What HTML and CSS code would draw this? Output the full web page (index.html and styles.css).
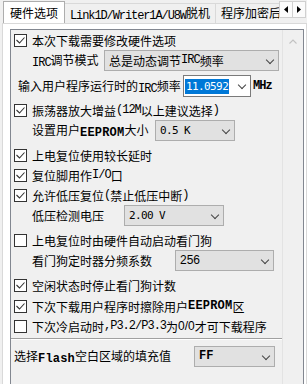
FILE: index.html
```html
<!DOCTYPE html>
<html>
<head>
<meta charset="utf-8">
<link rel="stylesheet" href="styles.css">
</head>
<body>
<div class="strip">
  <div class="tabs">
    <div class="tab sel">硬件选项</div>
    <div class="tab"><span class="l t">Link1D/Writer1A/U8W</span>脱机</div>
    <div class="tab">程序加密后</div>
  </div>
  <div class="spin">
    <span class="sb"><svg width="4" height="7" viewBox="0 0 4 7"><path d="M4 0 L0 3.5 L4 7Z" fill="#000"/></svg></span>
    <span class="sb"><svg width="4" height="7" viewBox="0 0 4 7"><path d="M0 0 L4 3.5 L0 7Z" fill="#000"/></svg></span>
  </div>
</div>
<div class="panel">
  <div class="box">
    <div class="content">
      <div class="row"><span class="cb"><svg width="11" height="11" viewBox="0 0 11 11"><path d="M1.5 5 L4.5 8 L9.5 2.5" fill="none" stroke="#333" stroke-width="1.1"/></svg></span>本次下载需要修改硬件选项</div>
      <div class="row ind"><span class="lbl w72"><span class="l">IRC</span>调节模式</span><span class="sel s175">总是动态调节<span class="l">IRC</span>频率<i class="chev"></i></span></div>
      <div class="row m6 ind2"><span class="lbl w165">输入用户程序运行时的<span class="l">IRC</span>频率</span><span class="edit"><span class="hl">11.0592</span><i class="chev"></i></span><span class="l unit">MHz</span></div>
      <div class="row m4"><span class="cb"><svg width="11" height="11" viewBox="0 0 11 11"><path d="M1.5 5 L4.5 8 L9.5 2.5" fill="none" stroke="#333" stroke-width="1.1"/></svg></span>振荡器放大增益<span class="l">(12M</span>以上建议选择<span class="l">)</span></div>
      <div class="row ind"><span class="lbl w123">设置用户<span class="l w">EEPROM</span>大小</span><span class="sel s80"><span class="mono">0.5 K</span><i class="chev"></i></span></div>
      <div class="row m5"><span class="cb"><svg width="11" height="11" viewBox="0 0 11 11"><path d="M1.5 5 L4.5 8 L9.5 2.5" fill="none" stroke="#333" stroke-width="1.1"/></svg></span>上电复位使用较长延时</div>
      <div class="row"><span class="cb"><svg width="11" height="11" viewBox="0 0 11 11"><path d="M1.5 5 L4.5 8 L9.5 2.5" fill="none" stroke="#333" stroke-width="1.1"/></svg></span>复位脚用作<span class="l">I/O</span>口</div>
      <div class="row"><span class="cb"><svg width="11" height="11" viewBox="0 0 11 11"><path d="M1.5 5 L4.5 8 L9.5 2.5" fill="none" stroke="#333" stroke-width="1.1"/></svg></span>允许低压复位<span class="l">(</span>禁止低压中断<span class="l">)</span></div>
      <div class="row ind"><span class="lbl w92">低压检测电压</span><span class="sel s100"><span class="mono">2.00 V</span><i class="chev"></i></span></div>
      <div class="row m5"><span class="cb"></span>上电复位时由硬件自动启动看门狗</div>
      <div class="row ind"><span class="lbl w143">看门狗定时器分频系数</span><span class="sel s99"><span class="sans">256</span><i class="chev"></i></span></div>
      <div class="row m5"><span class="cb"><svg width="11" height="11" viewBox="0 0 11 11"><path d="M1.5 5 L4.5 8 L9.5 2.5" fill="none" stroke="#333" stroke-width="1.1"/></svg></span>空闲状态时停止看门狗计数</div>
      <div class="row m1"><span class="cb"><svg width="11" height="11" viewBox="0 0 11 11"><path d="M1.5 5 L4.5 8 L9.5 2.5" fill="none" stroke="#333" stroke-width="1.1"/></svg></span>下次下载用户程序时擦除用户<span class="l w">EEPROM</span>区</div>
      <div class="row"><span class="cb"></span>下次冷启动时<span class="l">,P3.2/P3.3</span>为<span class="sans">0/0</span>才可下载程序</div>
      <div class="sep"></div>
      <div class="row m6 ind1"><span class="lbl w180">选择<span class="l w">Flash</span>空白区域的填充值</span><span class="sel s81"><span class="l ff">FF</span><i class="chev"></i></span></div>
    </div>
    <div class="vscroll"><svg width="8" height="5" viewBox="0 0 8 5"><path d="M0.5 4.5 L4 1 L7.5 4.5" fill="none" stroke="#c2c2c2" stroke-width="1.1"/></svg></div>
  </div>
</div>
</body>
</html>
```
FILE: styles.css
```css
html, body { margin: 0; padding: 0; }
body {
  width: 307px;
  height: 384px;
  overflow: hidden;
  background: #f0f0f0;
  font-family: "Noto Sans CJK SC", sans-serif;
  font-size: 12px;
  color: #000;
}
.l {
  font-family: "Liberation Mono", monospace;
  font-size: 12px;
  letter-spacing: -1px;
  vertical-align: -1px;
}
.l.w { letter-spacing: 0.2px; font-weight: bold; }
.l.t { letter-spacing: -1.1px; }
.mono {
  font-family: "DejaVu Sans Mono", monospace;
  font-size: 11px;
  letter-spacing: -0.6px;
  white-space: pre;
}
.sans { font-family: "Liberation Sans", sans-serif; font-size: 12px; }
.ff { font-weight: bold; letter-spacing: 0; }

/* tab strip */
.strip { display: flex; height: 23px; }
.tabs {
  display: flex;
  flex: 1;
  overflow: hidden;
  align-items: flex-end;
  padding-left: 3px;
  height: 23px;
}
.tab {
  box-sizing: border-box;
  height: 20px;
  line-height: 18px;
  padding: 0 5px 0 5px;
  border: 1px solid #d9d9d9;
  border-bottom: none;
  background: #f0f0f0;
  white-space: nowrap;
  margin-left: -1px;
  flex: none;
}
.tab.sel {
  height: 23px;
  line-height: 23px;
  background: #fff;
  padding: 0 6px 0 6px;
  margin-left: 0;
  position: relative;
  z-index: 1;
  margin-bottom: -1px;
}
.spin { display: flex; padding: 1px 1px 0 1px; }
.sb {
  box-sizing: border-box;
  width: 14px;
  height: 17px;
  border: 1px solid #d0d0d0;
  background: #fbfbfb;
  display: flex;
  align-items: center;
  justify-content: center;
  margin-left: -1px;
}

/* panel */
.panel {
  margin-left: 2px;
  border: 1px solid #d9d9d9;
  background: #fff;
  padding: 5px 2px 0 7px;
  height: 400px;
}
.box {
  display: flex;
  width: 294px;
  box-sizing: border-box;
  border: 1px solid #828790;
  background: #f0f0f0;
  height: 400px;
}
.content {
  width: 271px;
  padding-left: 3px;
  box-sizing: border-box;
  display: flex;
  flex-direction: column;
}
.vscroll {
  flex: 1;
  border-left: 1px solid #e3e3e3;
  display: flex;
  justify-content: center;
  padding-top: 9px;
  align-items: flex-start;
}

.row {
  display: flex;
  align-items: center;
  height: 20px;
  white-space: nowrap;
  flex: none;
}
.m1 { margin-top: 1px; }
.m4 { margin-top: 4px; }
.m5 { margin-top: 5px; }
.m6 { margin-top: 6px; }
.ind { padding-left: 18px; }
.ind1 { padding-left: 0; }
.ind2 { padding-left: 4px; }

.cb {
  box-sizing: border-box;
  width: 13px;
  height: 13px;
  border: 1px solid #333;
  background: #fff;
  margin-right: 5px;
  display: flex;
  flex: none;
}
.lbl { flex: none; }
.w72 { width: 72px; }
.w92 { width: 92px; }
.w123 { width: 123px; }
.w143 { width: 143px; }
.w165 { width: 165px; }
.w180 { width: 180px; }

.sel, .edit {
  position: relative;
  box-sizing: border-box;
  height: 21px;
  display: flex;
  align-items: center;
  padding-left: 4px;
  flex: none;
}
.sel { background: #e1e1e1; border: 1px solid #adadad; }
.s175 { width: 175px; }
.s80 { width: 80px; }
.s100 { width: 100px; }
.s99 { width: 99px; }
.s81 { width: 81px; }
.edit {
  width: 68px;
  height: 22px;
  background: #fff;
  border: 1px solid #7a7a7a;
  padding-left: 1px;
}
.hl {
  background: #0078d7;
  color: #fff;
  font-family: "DejaVu Sans Mono", monospace;
  font-size: 11px;
  letter-spacing: -0.6px;
  line-height: 15px;
  padding: 0 1px;
}
.chev {
  position: absolute;
  right: 5px;
  top: 6px;
  width: 5px;
  height: 5px;
  border-right: 1px solid #444;
  border-bottom: 1px solid #444;
  transform: rotate(45deg);
}
.unit { margin-left: 2px; font-weight: bold; }

.sep {
  height: 0;
  border-top: 1px solid #a0a0a0;
  border-bottom: 1px solid #fff;
  margin: 2px 0 0 -3px;
  flex: none;
}
```
